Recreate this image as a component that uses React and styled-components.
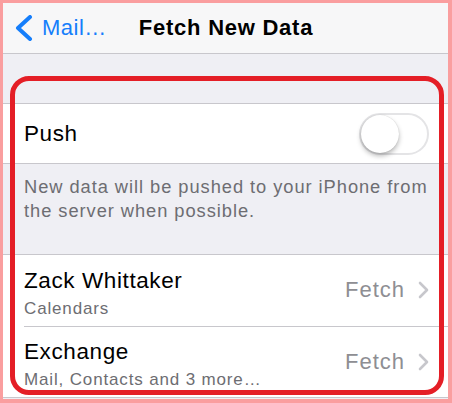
import React, { useState } from 'react';
import styled, { createGlobalStyle } from 'styled-components';

const GlobalStyle = createGlobalStyle`
    body{
        margin:0;
        font-family:"Liberation Sans", Arial, sans-serif;
        background:#fff;
    }
`;

const Frame = styled.div`
    position:relative;
    box-sizing:border-box;
    width:452px;
    height:403px;
    border-style:solid;
    border-color:#fa9e9f;
    border-width:3px 4px 4px 3px;
    background:#efeff4;
    overflow:hidden;
`;

const NavBar = styled.div`
    height:51px;
    background:#f7f7f8;
    border-bottom:1px solid #c8c7cc;
    display:flex;
    align-items:center;
    padding-left:12px;
    box-sizing:border-box;
`;

const Back = styled.div`
    display:flex;
    align-items:center;
    gap:9px;
    color:#157efb;
    font-size:22px;
    letter-spacing:0.5px;
    svg{
        display:block;
    }
`;

const Title = styled.h1`
    margin:0 0 0 32px;
    font-size:22px;
    letter-spacing:0.75px;
    font-weight:bold;
    color:#000;
`;

const Gap = styled.div`
    height:${(props)=>props.h}px;
`;

const Group = styled.div`
    background:#fff;
    border-top:1px solid #c8c7cc;
    border-bottom:1px solid #c8c7cc;
`;

const Row = styled.div`
    display:flex;
    align-items:center;
    justify-content:space-between;
    height:${(props)=>props.h}px;
    margin-left:21px;
    padding-right:18px;
    box-sizing:border-box;
    & + &{
        border-top:1px solid #c8c7cc;
    }
`;

const Label = styled.div`
    font-size:22.5px;
    letter-spacing:0.6px;
    color:#000;
    line-height:26px;
    margin-top:${(props)=>props.sub ? '6px' : '0'};
    small{
        display:block;
        font-size:17px;
        letter-spacing:0.85px;
        line-height:22px;
        color:#6d6d72;
        margin-top:4px;
    }
`;

const Detail = styled.div`
    display:flex;
    align-items:center;
    gap:13px;
    color:#8e8e93;
    font-size:22px;
    letter-spacing:1px;
    margin-top:-1px;
    margin-right:1px;
`;

const Note = styled.p`
    margin:0;
    padding:11px 12px 0 21px;
    height:90px;
    box-sizing:border-box;
    font-size:18.3px;
    line-height:24px;
    letter-spacing:0.95px;
    color:#6d6d72;
`;

const Toggle = styled.button`
    position:relative;
    width:70px;
    height:42px;
    border-radius:21px;
    border:2px solid #e4e4e6;
    background:${(props)=>props.$on ? '#4cd964' : '#fff'};
    padding:0;
    cursor:pointer;
    margin-right:1px;
    &::after{
        content:'';
        position:absolute;
        top:0;
        left:${(props)=>props.$on ? '28px' : '0'};
        width:38px;
        height:38px;
        border-radius:50%;
        background:#fff;
        box-shadow:0 3px 5px rgba(0,0,0,0.28), 0 0 1px rgba(0,0,0,0.2);
    }
    :focus{
        outline:none;
    }
`;

const Highlight = styled.div`
    position:absolute;
    left:7px;
    top:73px;
    width:434px;
    height:319px;
    box-sizing:border-box;
    border:5px solid #e41e26;
    border-radius:19px;
    pointer-events:none;
`;

function Chevron({ color, w, h, sw }) {
    return (
        <svg width={w} height={h} viewBox={`0 0 ${w} ${h}`}>
            <polyline points={`${w - sw/2 - 1},${sw/2} ${sw/2 + 1},${h/2} ${w - sw/2 - 1},${h - sw/2}`}
                fill="none" stroke={color} strokeWidth={sw} strokeLinecap="round" strokeLinejoin="round" />
        </svg>
    );
}

function Arrow() {
    return (
        <svg width="11" height="18" viewBox="0 0 11 18">
            <polyline points="2,2 9,9 2,16" fill="none" stroke="#c7c7cc" strokeWidth="2.6" strokeLinecap="round" strokeLinejoin="round" />
        </svg>
    );
}

const accounts = [
    { name: 'Zack Whittaker', sub: 'Calendars', value: 'Fetch' },
    { name: 'Exchange', sub: 'Mail, Contacts and 3 more\u2026', value: 'Fetch' },
];

export default function App() {
    const [push, setPush] = useState(false);
    return (
        <Frame>
            <GlobalStyle />
            <NavBar>
                <Back>
                    <Chevron color="#157efb" w={18} h={26} sw={4} />
                    <span>{'Mail\u2026'}</span>
                </Back>
                <Title>Fetch New Data</Title>
            </NavBar>
            <Gap h={49} />
            <Group>
                <Row h={59}>
                    <Label>Push</Label>
                    <Toggle $on={push} onClick={()=>{setPush(!push)}} />
                </Row>
            </Group>
            <Note>New data will be pushed to your iPhone from the server when possible.</Note>
            <Group>
                {accounts.map((a)=>(
                    <Row h={71} key={a.name}>
                        <Label sub>
                            {a.name}
                            <small>{a.sub}</small>
                        </Label>
                        <Detail>
                            {a.value}
                            <Arrow />
                        </Detail>
                    </Row>
                ))}
            </Group>
            <Highlight />
        </Frame>
    );
}
